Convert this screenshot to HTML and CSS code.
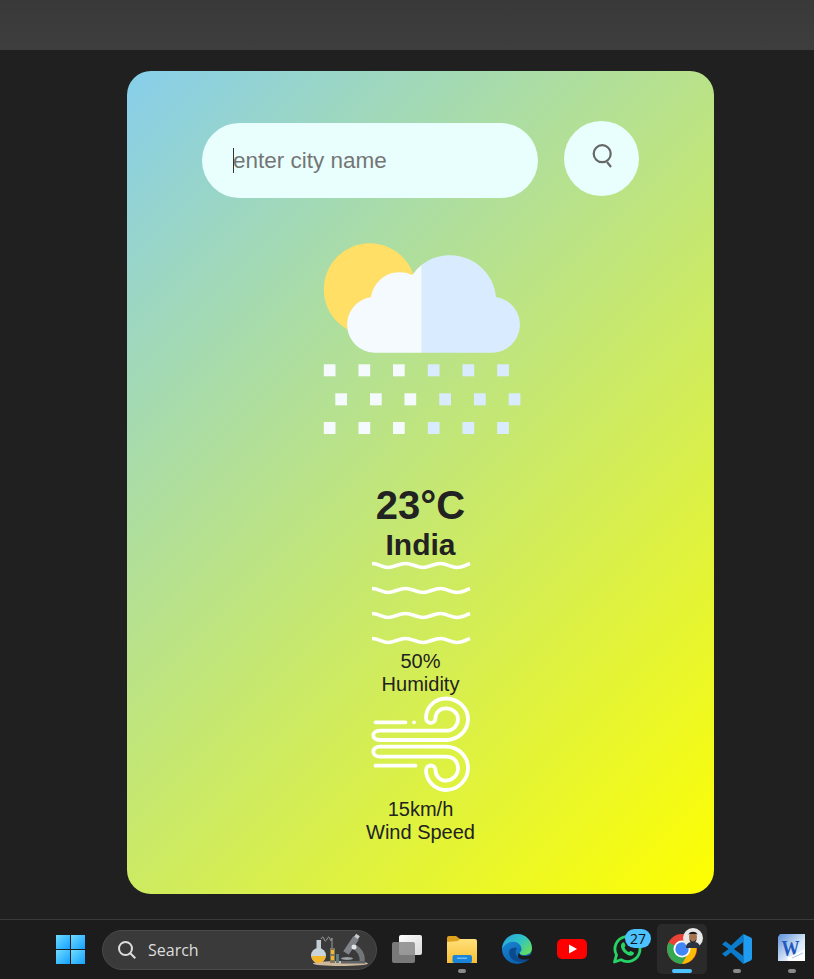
FILE: index.html
```html
<!DOCTYPE html>
<html lang="en">
<head>
<meta charset="utf-8">
<title>Weather</title>
<link rel="stylesheet" href="styles.css">
</head>
<body>
<div class="topbar"></div>
<main class="stage">
  <section class="card">
    <form class="search">
      <div class="field">
        <input class="city" type="text" placeholder="enter city name">
        <span class="caret"></span>
      </div>
      <button class="go" type="button" aria-label="Search">
        <svg class="go-icon" viewBox="0 0 28 28"><circle cx="14.200" cy="11.700" r="8.500"/><path d="M19 20l4 5"/></svg>
      </button>
    </form>
    <svg class="weather" viewBox="320.500 240 200 200">
      <circle cx="369.300" cy="289.300" r="46" fill="#ffdf66"/>
      <path fill="#f5faff" d="M421.300 352.700H374.500A28 28 0 0 1 370.500 297A29 29 0 0 1 411.700 275A46.200 46.200 0 0 1 421.300 264.800Z"/>
      <path fill="#d9ecff" d="M421.300 264.800A46.200 46.200 0 0 1 495.500 297A28 28 0 0 1 491.500 352.700H421.300Z"/>
      <g fill="#f5faff">
        <rect x="323.300" y="364.300" width="11.700" height="12"/><rect x="358" y="364.300" width="11.700" height="12"/><rect x="392.500" y="364.300" width="11.700" height="12"/>
        <rect x="334.800" y="393.300" width="11.700" height="12"/><rect x="369.500" y="393.300" width="11.700" height="12"/><rect x="404" y="393.300" width="11.700" height="12"/>
        <rect x="323.300" y="422" width="11.700" height="12"/><rect x="358" y="422" width="11.700" height="12"/><rect x="392.500" y="422" width="11.700" height="12"/>
      </g>
      <g fill="#d9ecff">
        <rect x="427.300" y="364.300" width="11.700" height="12"/><rect x="462" y="364.300" width="11.700" height="12"/><rect x="496.700" y="364.300" width="11.700" height="12"/>
        <rect x="438.800" y="393.300" width="11.700" height="12"/><rect x="473.500" y="393.300" width="11.700" height="12"/><rect x="508.200" y="393.300" width="11.700" height="12"/>
        <rect x="427.300" y="422" width="11.700" height="12"/><rect x="462" y="422" width="11.700" height="12"/><rect x="496.700" y="422" width="11.700" height="12"/>
      </g>
    </svg>
    <h1 class="temp">23°C</h1>
    <h2 class="place">India</h2>
    <svg class="humidity-icon" viewBox="0 0 100 88">
      <g class="wave-art">
        <path d="M1 1.500C8 1.500 11 5.500 17 5.500S28 1.500 34.500 1.500S46 5.500 52 5.500S63 1.500 69.500 1.500S80 5.500 86 5.500S93 3.500 99 1.500"/>
        <path d="M1 26.500C8 26.500 11 30.500 17 30.500S28 26.500 34.500 26.500S46 30.500 52 30.500S63 26.500 69.500 26.500S80 30.500 86 30.500S93 28.500 99 26.500"/>
        <path d="M1 51.500C8 51.500 11 55.500 17 55.500S28 51.500 34.500 51.500S46 55.500 52 55.500S63 51.500 69.500 51.500S80 55.500 86 55.500S93 53.500 99 51.500"/>
        <path d="M1 76.500C8 76.500 11 80.500 17 80.500S28 76.500 34.500 76.500S46 80.500 52 80.500S63 76.500 69.500 76.500S80 80.500 86 80.500S93 78.500 99 76.500"/>
      </g>
    </svg>
    <p class="value">50%</p>
    <p class="label">Humidity</p>
    <svg class="wind-icon" viewBox="0 0 100 100">
      <g class="line-art">
        <path d="M4.500 26.300H34.500M43 26.300H43.100"/>
        <path d="M4.500 69.700H44.500"/>
        <path d="M9 34.700H75C83 34.700 87 28.500 87 23C87 16.500 81 12.300 75 12.300C69 12.300 64.500 16.500 64.500 22C64.500 28.500 55 28.500 55 22C55 11 64 2.500 75 2.500C87 2.500 97 12 97 23C97 35 87 44 75 44H9C0 44 0 34.700 9 34.700Z"/>
        <path d="M9 50.700H75C87 50.700 97 60 97 72C97 84 87 94 75 94C64 94 55 85 55 74C55 68 64.500 68 64.500 74C64.500 80 69 84.700 75 84.700C81 84.700 87 79.500 87 72.500C87 66 83 60.700 75 60.700H9C0 60.700 0 50.700 9 50.700Z"/>
      </g>
    </svg>
    <p class="value">15km/h</p>
    <p class="label">Wind Speed</p>
  </section>
</main>
<footer class="taskbar">
  <span class="win"><i></i><i></i><i></i><i></i></span>
  <div class="searchbox">
    <svg class="sb-icon" viewBox="0 0 20 20"><circle cx="8.500" cy="8.500" r="6.500"/><path d="M13.300 13.300l5 5"/></svg>
    <span class="sb-text">Search</span>
    <svg class="doodle" viewBox="0 0 60 40">
      <ellipse cx="30.500" cy="33.500" rx="27.500" ry="2.400" fill="#cdb89d"/>
      <path d="M11 9q2-4 3 0t3 0t3 0t2-1v12" fill="none" stroke="#9a9a9a" stroke-width="1"/>
      <rect x="6.500" y="10" width="4.500" height="9" fill="#c3ccd2"/>
      <circle cx="8.500" cy="25.500" r="7.500" fill="#c9d4da"/>
      <path d="M1.500 26h14a7 7 0 0 1-14 0z" fill="#f3b62c"/>
      <rect x="20" y="18" width="5" height="15" fill="#7f7a5c"/>
      <rect x="21" y="20" width="3" height="4" fill="#f3b62c"/>
      <rect x="21" y="26" width="3" height="4" fill="#f3b62c"/>
      <rect x="26" y="24" width="3" height="9" fill="#5f7a80"/>
      <path d="M46 8L36 23" stroke="#7f8488" stroke-width="6.500" fill="none"/>
      <path d="M46 8l2-3" stroke="#c6cace" stroke-width="4.500" fill="none"/>
      <path d="M43 16q11 6 9 17" stroke="#70767a" stroke-width="5" fill="none"/>
      <circle cx="44" cy="17" r="2.500" fill="#e4e6e8"/>
      <ellipse cx="37" cy="28.500" rx="6" ry="1.500" fill="#9a9fa3"/>
      <rect x="31" y="31" width="24" height="2.500" fill="#5e6366"/>
    </svg>
  </div>
  <div class="apps">
    <div class="app">
      <svg class="app-icon" viewBox="0 0 30 30">
        <defs><linearGradient id="tv" x1="0" y1="0" x2="1" y2="1"><stop offset="0" stop-color="#ffffff"/><stop offset="1" stop-color="#d8d8d8"/></linearGradient></defs>
        <rect x="7" y="1" width="23" height="20" rx="2" fill="url(#tv)"/>
        <rect x="0" y="8" width="23" height="21" rx="2" fill="#8a8a8a" fill-opacity=".85"/>
      </svg>
    </div>
    <div class="app">
      <svg class="app-icon" viewBox="0 0 30 30">
        <defs><linearGradient id="fd" x1="0" y1="0" x2="0" y2="1"><stop offset="0" stop-color="#ffe07a"/><stop offset="1" stop-color="#f8bf35"/></linearGradient></defs>
        <path d="M0 4a2 2 0 0 1 2-2h7l4 3v4H0z" fill="#dfa21f"/>
        <path d="M0 8l11-1 2-2h15a2 2 0 0 1 2 2v22H0z" fill="url(#fd)"/>
        <rect x="5.500" y="21" width="19.500" height="8" rx="2" fill="#1a84d8"/>
        <rect x="10" y="23.500" width="10" height="1.500" fill="#6dbcf5"/>
      </svg>
      <span class="pip"></span>
    </div>
    <div class="app">
      <svg class="app-icon" viewBox="0 0 30 30">
        <defs>
          <linearGradient id="eg1" x1="0" y1="0" x2="1" y2=".7"><stop offset="0" stop-color="#2a9fde"/><stop offset=".55" stop-color="#2fc3c6"/><stop offset="1" stop-color="#63dc62"/></linearGradient>
          <linearGradient id="eg2" x1="0" y1="0" x2=".6" y2="1"><stop offset="0" stop-color="#1c8fe0"/><stop offset="1" stop-color="#0a5ea8"/></linearGradient>
        </defs>
        <circle cx="15" cy="15" r="15" fill="url(#eg2)"/>
        <path d="M7 18C7 24 12 28 19 28C23 28 26 27 28 24C24 25 19 25 16 23C13 21 13 17 15 14C10 13 7 15 7 18Z" fill="#0b4a8c"/>
        <path d="M17 19C18 22 23 23 28 21C29.500 20 30 18 30 16V30H18C23 30 27 28 29 24C25 26 20 26 17 24C15.500 22.500 16 20 17 19Z" fill="#1c1c1c"/>
        <path d="M0 15C1 6 8 0 15 0C24 0 30 7 30 14C30 19 26 21 22 21C19 21 17 20 18 18C20 17 20 14 18 11C15 7 10 7 6 9C3 10.500 1 12.500 0 15Z" fill="url(#eg1)"/>
      </svg>
    </div>
    <div class="app">
      <svg class="app-icon" viewBox="0 0 30 30">
        <rect x="0" y="5" width="30" height="20" rx="5" fill="#ff0000"/>
        <path d="M12 10.500L20 15L12 19.500Z" fill="#fff"/>
      </svg>
    </div>
    <div class="app">
      <svg class="app-icon" viewBox="0 0 30 30">
        <path d="M2.500 28L4.500 21A12.500 12.500 0 1 1 9 25.700Z" fill="none" stroke="#25d366" stroke-width="2.800" stroke-linejoin="round"/>
        <path d="M10 9c1-1 2-1 2.500 0l1 2.500c.2.600-1 1.500-1 2.200.5 1.500 2.800 3.800 4.300 4.300.7 0 1.500-1.200 2.100-1l2.500 1.200c.8.500.7 1.500 0 2.300-1.500 1.700-4 1.500-6.500 0-3-1.800-5-4.300-5.700-6.800C8.800 11.800 9 10 10 9z" fill="#25d366"/>
      </svg>
      <span class="badge">27</span>
    </div>
    <div class="app is-open">
      <span class="tile"></span>
      <svg class="app-icon" viewBox="0 0 30 30">
        <circle cx="15" cy="15" r="15" fill="#ea4335"/>
        <path d="M15 15L1.500 8.500A15 15 0 0 0 15 30L21.500 18.500Z" fill="#34a853"/>
        <path d="M15 8.500H28A15 15 0 0 1 15 30L21.500 18.500Z" fill="#fbbc04"/>
        <circle cx="15" cy="15" r="8.500" fill="#fff"/>
        <circle cx="15" cy="15" r="6.700" fill="#4285f4"/>
      </svg>
      <svg class="avatar" viewBox="0 0 20 20">
        <circle cx="10" cy="10" r="10" fill="#e8e8e8"/>
        <path d="M3 20c0-5 3-6 7-6s7 1 7 6z" fill="#2b3342"/>
        <ellipse cx="10" cy="9" rx="4" ry="5" fill="#a5754f"/>
        <path d="M5.500 7C5.500 2.500 14.500 2.500 14.500 7L13.500 6H6.500Z" fill="#1e1a18"/>
        <path d="M6.500 11q3.500 5 7 0q0 3.500-3.500 3.500T6.500 11z" fill="#2a211c"/>
      </svg>
      <span class="bar"></span>
    </div>
    <div class="app">
      <svg class="app-icon" viewBox="0 0 100 100">
        <path d="M71 0L30 38L12 24L0 34V66L12 76L30 62L71 100V73L40 50L71 27Z" fill="#0a7ccb"/>
        <path d="M0 34L22 50L0 66Z" fill="#1c1c1c"/>
        <path d="M71 0L96 12C98 13 100 15 100 18V82C100 85 98 87 96 88L71 100Z" fill="#1f9cf0"/>
      </svg>
      <span class="pip"></span>
    </div>
    <div class="app">
      <svg class="app-icon" viewBox="0 0 30 30">
        <defs><linearGradient id="wd" x1="0" y1="0" x2="1" y2="1"><stop offset="0" stop-color="#5c90da"/><stop offset=".6" stop-color="#dce8f8"/><stop offset="1" stop-color="#f4f8fd"/></linearGradient></defs>
        <path d="M3 0H28V27H1V3z" fill="url(#wd)"/>
        <text class="word-w" x="4.500" y="22" textLength="18" lengthAdjust="spacingAndGlyphs">W</text>
        <path d="M10 24L28 15V27H11Z" fill="#fff"/>
        <path d="M15 24l11-5" stroke="#a9c3e6" stroke-width="1"/>
      </svg>
      <span class="pip"></span>
    </div>
  </div>
</footer>
</body>
</html>
```
FILE: styles.css
```css
*{box-sizing:border-box}
html,body{margin:0;height:100%}
body{display:flex;flex-direction:column;background:#202020;font-family:"Liberation Sans",Arial,sans-serif;color:#222;overflow:hidden}
.topbar{height:50px;flex:none;background:linear-gradient(#393939,#3e3e3e)}
.stage{flex:1;display:flex;justify-content:center;align-items:flex-start;padding:21px 0 0 27px}
.card{width:587px;height:823px;border-radius:24px;background:linear-gradient(135deg,#87ceeb,#ffff00);display:flex;flex-direction:column;align-items:center;padding-top:50px}
.search{display:flex;align-items:flex-start;gap:26px}
.field{position:relative;margin-top:2px}
.city{display:block;width:336px;height:75px;border:0;border-radius:38px;background:#e8fffd;padding:0 31px;font:22.500px "Liberation Sans",Arial,sans-serif;outline:0}
.city::placeholder{color:#757575}
.caret{position:absolute;left:31px;top:25px;width:1px;height:25px;background:#333}
.go{width:75px;height:75px;border:0;border-radius:50%;background:#e8fffd;padding:0;display:flex;align-items:center;justify-content:center}
.go-icon{width:28px;height:28px;fill:none;stroke:#666;stroke-width:2.200;margin-top:-5px}
.weather{width:200px;height:200px;margin-top:42px;display:block}
.temp{margin:42px 0 0;font-size:40px;line-height:46px;font-weight:700}
.place{margin:0;font-size:30px;line-height:34px;font-weight:700}
.humidity-icon{width:100px;height:88px;display:block;overflow:visible}
.wind-icon{width:100px;height:100px;display:block;margin-bottom:1.500px}
.wave-art{fill:none;stroke:#fff;stroke-width:3.600}
.line-art{fill:none;stroke:#fff;stroke-width:3.800;stroke-linecap:round;stroke-linejoin:round}
.value,.label{margin:0;font-size:20px;line-height:23px}
.taskbar{height:60px;flex:none;background:#1c1c1c;border-top:1px solid #3a3a3a;display:flex;align-items:center;padding-left:56px}
.win{display:grid;grid-template-columns:14px 14px;gap:1px;width:29px}
.win i{height:14px;background:linear-gradient(135deg,#6fdcff,#14a0ff)}
.searchbox{margin-left:17px;width:275px;height:40px;border-radius:20px;background:#3a3a3a;border:1px solid #4a4a4a;display:flex;align-items:center;padding:0 6px 0 14px;gap:11px}
.sb-icon{width:20px;height:20px;fill:none;stroke:#ddd;stroke-width:2}
.sb-text{font:16px "Open Sans",sans-serif;color:#ddd}
.doodle{width:60px;height:40px;margin-left:auto;flex:none}
.apps{display:flex;gap:25px;margin-left:15px}
.app{position:relative;width:30px;height:30px;flex:none;margin-top:-1px}
.app-icon{position:relative;display:block;width:30px;height:30px}
.pip{position:absolute;left:11px;top:35px;width:8px;height:4px;border-radius:2px;background:#8a8a8a}
.bar{position:absolute;left:5px;top:35px;width:20px;height:4px;border-radius:2px;background:#4cc2ff}
.tile{position:absolute;left:-10px;top:-10px;width:50px;height:50px;border-radius:5px;background:#2a2a2a}
.badge{position:absolute;left:13px;top:-5px;width:26px;height:19px;border-radius:10px;background:#4cc2ff;color:#111;font:14px/19px "Open Sans",sans-serif;text-align:center}
.avatar{position:absolute;left:16px;top:-6px;width:20px;height:20px}
.word-w{font:700 24px "Liberation Serif",serif;fill:#1f5bbf}
```
